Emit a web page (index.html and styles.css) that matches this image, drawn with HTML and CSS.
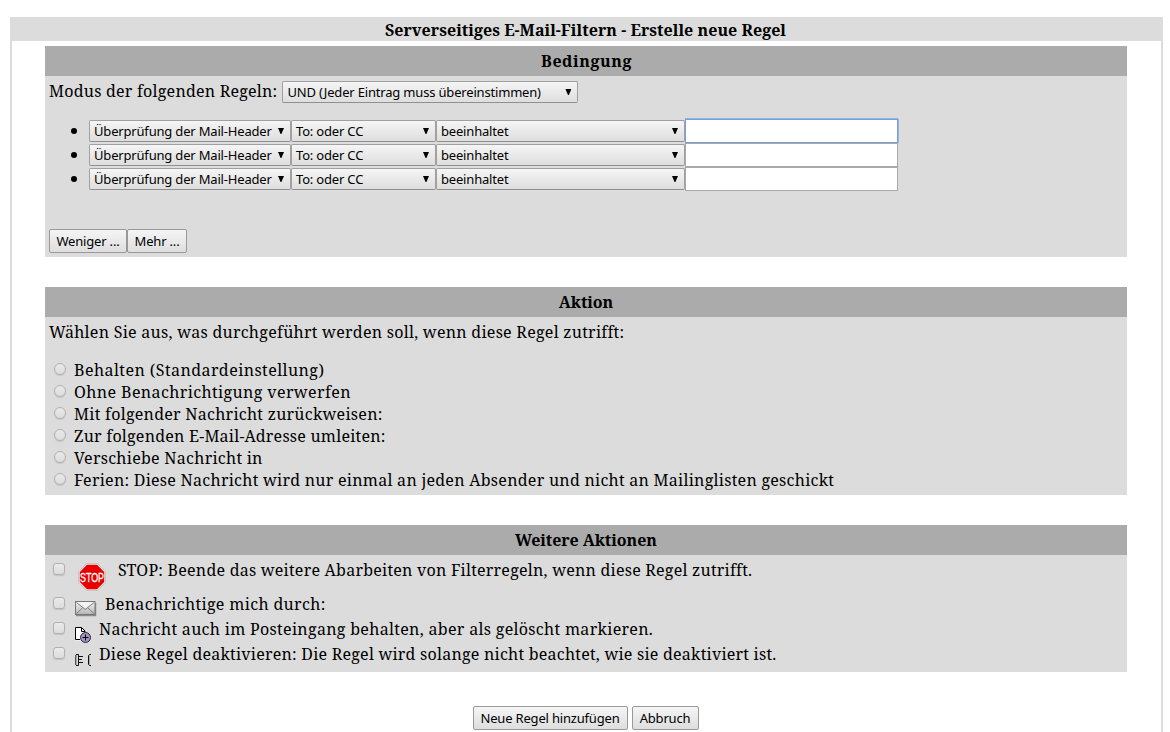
FILE: index.html
```
<!DOCTYPE html>
<html lang="de">
<head>
<meta charset="utf-8">
<title>Serverseitiges E-Mail-Filtern</title>
<link rel="stylesheet" href="styles.css">
</head>
<body>
<form class="frame">
  <h1 class="title">Serverseitiges E-Mail-Filtern - Erstelle neue Regel</h1>
  <section class="panel conditions">
    <h2 class="wide">Bedingung</h2>
    <div class="mode"><span class="t22">Modus der folgenden Regeln:</span>
      <div class="select mode-select"><span>UND (Jeder Eintrag muss übereinstimmen)</span><i></i></div>
    </div>
    <ul class="rules">
      <li><div class="select kind"><span>Überprüfung der Mail-Header</span><i></i></div><div class="select header"><span>To: oder CC</span><i></i></div><div class="select match"><span>beeinhaltet</span><i></i></div><input class="focused" type="text"></li>
      <li><div class="select kind"><span>Überprüfung der Mail-Header</span><i></i></div><div class="select header"><span>To: oder CC</span><i></i></div><div class="select match"><span>beeinhaltet</span><i></i></div><input type="text"></li>
      <li><div class="select kind"><span>Überprüfung der Mail-Header</span><i></i></div><div class="select header"><span>To: oder CC</span><i></i></div><div class="select match"><span>beeinhaltet</span><i></i></div><input type="text"></li>
    </ul>
    <div class="buttons"><button type="button" class="less">Weniger ...</button><button type="button" class="more">Mehr ...</button></div>
  </section>

  <section class="panel action">
    <h2>Aktion</h2>
    <p class="t27">Wählen Sie aus, was durchgeführt werden soll, wenn diese Regel zutrifft:</p>
    <label><input type="radio" name="a"><span class="t43">Behalten (Standardeinstellung)</span></label>
    <label><input type="radio" name="a"><span class="t39">Ohne Benachrichtigung verwerfen</span></label>
    <label><input type="radio" name="a"><span class="t27">Mit folgender Nachricht zurückweisen:</span></label>
    <label><input type="radio" name="a"><span class="t22">Zur folgenden E-Mail-Adresse umleiten:</span></label>
    <label><input type="radio" name="a"><span class="t27">Verschiebe Nachricht in</span></label>
    <label><input type="radio" name="a"><span class="t27">Ferien: Diese Nachricht wird nur einmal an jeden Absender und nicht an Mailinglisten geschickt</span></label>
  </section>

  <section class="panel extra">
    <h2>Weitere Aktionen</h2>
    <label class="stop"><input type="checkbox">
      <svg width="30" height="30" viewBox="0 0 30 30"><path d="M9.500 1.500h11l8 8v11l-8 8h-11l-8-8v-11z" fill="#f3e6e6" stroke="#c4bcbc" stroke-width=".8"/><path d="M10 2.800h10l7.200 7.200v10L20 27.200H10L2.800 20V10z" fill="#e60000"/><text transform="translate(15 20) scale(.66 1)" text-anchor="middle">STOP</text></svg>
      <span class="t24">STOP: Beende das weitere Abarbeiten von Filterregeln, wenn diese Regel zutrifft.</span></label>
    <label class="notify"><input type="checkbox">
      <svg width="23" height="17" viewBox="0 0 23 17"><defs><linearGradient id="g" x2="0" y2="1"><stop stop-color="#f5f5f5"/><stop offset="1" stop-color="#b4b4b4"/></linearGradient></defs><path d="M1 15.500h19.500V3" fill="none" stroke="#777" stroke-width="1.500" opacity=".8"/><rect x=".5" y="1.500" width="19.500" height="13" fill="url(#g)" stroke="#777"/><path d="M1.500 2.500l8.800 7 8.700-7M1.500 13.500L7.500 8M19 13.500L13 8" fill="none" stroke="#808080"/><path d="M2.500 2.300h15.500l-7.700 6z" fill="#f3f3f3"/></svg>
      <span class="t34">Benachrichtige mich durch:</span></label>
    <label class="keep"><input type="checkbox">
      <svg width="16" height="16" viewBox="0 0 16 16"><path d="M.5.5h6l4 4v9H.5z" fill="#fff"/><path d="M5 12.500H.5V.5h6L10 4v1M6.500.5v4H10" fill="none" stroke="#000"/><circle cx="10.500" cy="10.500" r="5" fill="#a293c0" stroke="#292338"/><path d="M7.500 10.500h6M10.500 7.500v6" stroke="#000"/></svg>
      <span class="t31">Nachricht auch im Posteingang behalten, aber als gelöscht markieren.</span></label>
    <label class="disable"><input type="checkbox">
      <svg width="17" height="13" viewBox="0 0 17 13"><path d="M.5 1h3v10h-3zM13.500 1H16v10h-2.500z" fill="#ddd"/><path d="M1.500 1v10M14.500 1v10" stroke="#aaa"/><path d="M.5 1v10" stroke="#555"/><path d="M1 .5h2.500v11H1M4 2.500h4M4 5.500h3M4 8.500h4M16 .5h-1.500l-1 1v9l1 1H16" fill="none" stroke="#111"/></svg>
      <span class="t24">Diese Regel deaktivieren: Die Regel wird solange nicht beachtet, wie sie deaktiviert ist.</span></label>
  </section>
  <div class="submit"><button type="button" class="add">Neue Regel hinzufügen</button><button type="button" class="cancel">Abbruch</button></div>
</form>
</body>
</html>
```
FILE: styles.css
```
* { box-sizing: border-box; }
body { margin: 0; height: 732px; overflow: hidden; background: #fff; color: #000; font: 16px/22px "Noto Serif", "Droid Serif", "DejaVu Serif Condensed", "DejaVu Serif", serif; }
.frame { margin: 17px 7px 0 10px; height: 715px; border: solid #dcdcdc; border-width: 0 2px; }
h1, h2 { margin: 0; font-size: 16px; text-align: center; white-space: nowrap; }
.title { height: 24px; line-height: 26px; background: #dcdcdc; margin: 0 -2px 5px; padding-right: 2px; letter-spacing: .04px; }
.panel { width: 1082px; margin: 0 0 30px 33px; background: #dcdcdc; white-space: nowrap; }
.panel h2 { height: 30px; line-height: 30px; background: #ababab; letter-spacing: -.07px; }
.panel .wide { letter-spacing: .55px; padding-left: 1px; }
.t22 { letter-spacing: .23px; }
.t24 { letter-spacing: .235px; }
.t27 { letter-spacing: .266px; }
.t31 { letter-spacing: .31px; }
.t34 { letter-spacing: .34px; }
.t39 { letter-spacing: .39px; }
.t43 { letter-spacing: .44px; }
.conditions { height: 211px; }
.action { height: 208px; }
.extra { height: 147px; margin-bottom: 34px; }
.mode { display: flex; gap: 5px; height: 27px; padding: 5px 4px 0; line-height: 20px; }
.select, button, input[type=text] { font: 13px/20px "Noto Sans", sans-serif; letter-spacing: -.18px; color: #000; }
.select { flex: none; display: flex; justify-content: space-between; align-items: center; height: 22px; padding: 0 6px 0 4px; border: 1px solid #a0a0a0; border-bottom-color: #909090; border-radius: 2px; background: linear-gradient(#f5f5f5, #dedede); }
.select i { flex: none; width: 6px; height: 6px; background: #000; clip-path: polygon(0 0, 100% 0, 57% 100%, 43% 100%); }
.mode-select { width: 296px; }
.rules { margin: 16px 0 0; padding: 0 0 0 44px; list-style: none; }
.rules li { display: flex; height: 24px; align-items: center; position: relative; }
.rules li::before { content: ""; position: absolute; left: -18px; top: 9px; width: 6px; height: 6px; border-radius: 50%; background: #000; }
.kind { width: 202px; }
.header { width: 145px; }
.match { width: 249px; }
input[type=text] { width: 213px; height: 24px; margin: 0; border: 1px solid #a9a9a9; background: #fff; outline: none; }
input.focused { border-color: #7a9ed9; box-shadow: 0 -1px 0 #8fb1ee, 1px 0 0 #8fb1ee; }
button { height: 24px; padding: 0; line-height: 22px; border: 1px solid #999; border-radius: 2px; background: linear-gradient(#f5f5f5, #dedede); }
.buttons { display: flex; padding: 38px 4px 0; }
.less { width: 78px; }
.more { width: 60px; }
.action p { margin: 0 0 12px; padding: 4px 4px 0; height: 30px; }
label { display: flex; }
.action label { height: 22px; padding-left: 9px; }
input[type=radio], input[type=checkbox] { appearance: none; flex: none; border: 1px solid #b1b1b1; background: linear-gradient(#eaeaea, #dcdcdc); box-shadow: 0 1px 1px #c3c3c3; }
input[type=radio] { width: 12px; height: 12px; margin: 4px 8px 0 0; border-radius: 50%; }
input[type=checkbox] { width: 12px; height: 12px; margin: 4px 10px 0 0; border-radius: 3px; }
.extra label { padding-left: 8px; }
.extra svg { flex: none; }
.stop { height: 34px; padding-top: 4px; }
.stop svg { margin: 3px 11px 0 2px; overflow: visible; }
.stop text { font: 13.500px "Liberation Sans", sans-serif; fill: #fff; stroke: #fff; stroke-width: .3px; }
.notify { height: 25px; padding-top: 4px; }
.notify svg { margin: 7px 7px 0 0; }
.keep { height: 25px; padding-top: 4px; }
.keep svg { margin: 9px 8px 0 0; }
.disable { padding-top: 4px; }
.disable svg { margin: 11px 7px 0 0; }
.submit { display: flex; justify-content: center; gap: 4px; padding-right: 2px; }
.add { width: 155px; }
.cancel { width: 67px; }
```
